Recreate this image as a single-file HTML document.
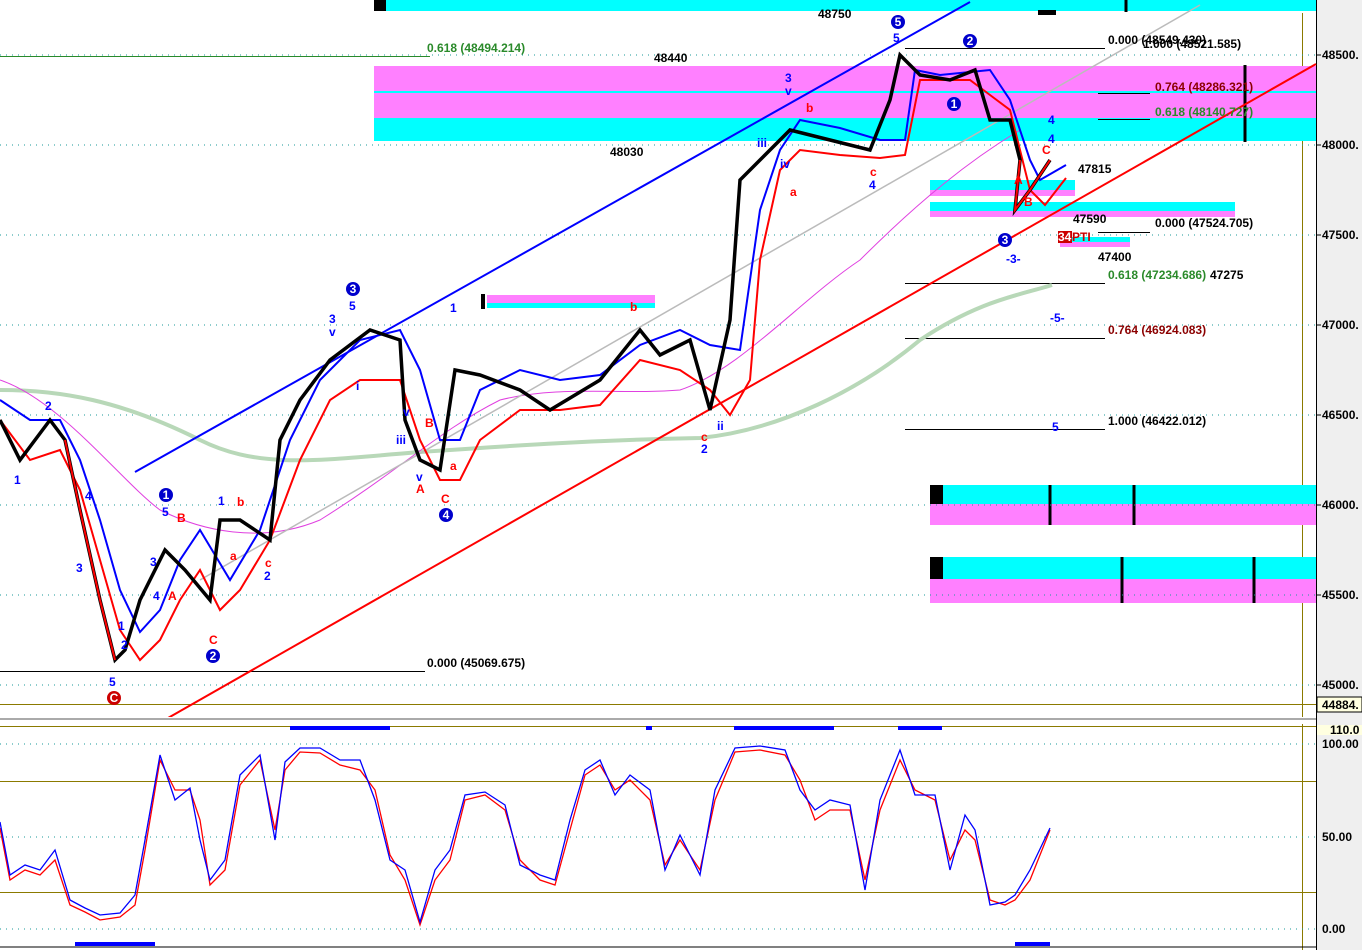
<!DOCTYPE html>
<html><head><meta charset="utf-8"><style>
html,body{margin:0;padding:0;background:#fff;}
svg{display:block;font-family:"Liberation Sans",Arial,sans-serif;}
text{font-size:12px;}
.b{font-weight:bold;}
</style></head><body>
<svg width="1362" height="950" viewBox="0 0 1362 950">
<rect x="0" y="0" width="1362" height="950" fill="#fff"/>
<rect x="1317" y="0" width="45" height="950" fill="#efefef"/>
<line x1="1316.5" y1="0" x2="1316.5" y2="950" stroke="#000"/>
<line x1="1302.5" y1="0" x2="1302.5" y2="950" stroke="#8b7a00"/>
<rect x="386" y="0" width="930" height="11" fill="#00ffff"/>
<rect x="374" y="0" width="12" height="11" fill="#000"/>
<rect x="1222" y="11" width="94" height="2" fill="#fff"/>
<rect x="374" y="66" width="942" height="25" fill="#ff80ff"/>
<rect x="374" y="91" width="942" height="2" fill="#00ffff"/>
<rect x="374" y="93" width="942" height="25" fill="#ff80ff"/>
<rect x="374" y="118" width="942" height="23" fill="#00ffff"/>
<rect x="930" y="180" width="145" height="10" fill="#00ffff"/>
<rect x="930" y="190" width="145" height="6" fill="#ff80ff"/>
<rect x="930" y="202" width="305" height="9" fill="#00ffff"/>
<rect x="930" y="211" width="305" height="6" fill="#ff80ff"/>
<rect x="1060" y="237" width="70" height="5" fill="#00ffff"/>
<rect x="1060" y="242" width="70" height="5" fill="#ff80ff"/>
<rect x="487" y="295" width="168" height="8" fill="#ff80ff"/>
<rect x="487" y="303" width="168" height="5" fill="#00ffff"/>
<rect x="481" y="294" width="4" height="15" fill="#000"/>
<rect x="930" y="485" width="386" height="19" fill="#00ffff"/>
<rect x="930" y="504" width="386" height="21" fill="#ff80ff"/>
<rect x="930" y="485" width="13" height="19" fill="#000"/>
<rect x="930" y="557" width="386" height="22" fill="#00ffff"/>
<rect x="930" y="579" width="386" height="24" fill="#ff80ff"/>
<rect x="930" y="557" width="13" height="22" fill="#000"/>
<g stroke="#000" stroke-width="3"><line x1="1050" y1="485" x2="1050" y2="525"/><line x1="1134" y1="485" x2="1134" y2="525"/><line x1="1122" y1="557" x2="1122" y2="603"/><line x1="1254" y1="557" x2="1254" y2="603"/><line x1="1245" y1="65" x2="1245" y2="142"/><line x1="1126" y1="0" x2="1126" y2="12"/></g>
<rect x="1038" y="10" width="18" height="5" fill="#000"/>
<g stroke="#1a9a9a" stroke-dasharray="1,5">
<line x1="0" y1="55" x2="1316" y2="55"/><line x1="0" y1="145" x2="1316" y2="145"/><line x1="0" y1="235" x2="1316" y2="235"/><line x1="0" y1="325" x2="1316" y2="325"/><line x1="0" y1="415" x2="1316" y2="415"/><line x1="0" y1="505" x2="1316" y2="505"/><line x1="0" y1="595" x2="1316" y2="595"/><line x1="0" y1="685" x2="1316" y2="685"/>
<line x1="0" y1="744" x2="1316" y2="744"/><line x1="0" y1="837" x2="1316" y2="837"/><line x1="0" y1="929" x2="1316" y2="929"/>
</g>
<line x1="0" y1="704.5" x2="1316" y2="704.5" stroke="#8b7a00"/>
<line x1="0" y1="56.5" x2="430" y2="56.5" stroke="#2a8a2a"/>
<g stroke="#000" stroke-width="1">
<line x1="0" y1="671.5" x2="425" y2="671.5"/>
<line x1="905" y1="48.5" x2="1105" y2="48.5"/>
<line x1="1098" y1="93.5" x2="1150" y2="93.5"/>
<line x1="1098" y1="119.5" x2="1150" y2="119.5"/>
<line x1="1098" y1="232.5" x2="1150" y2="232.5"/>
<line x1="905" y1="283.5" x2="1105" y2="283.5"/>
<line x1="905" y1="338.5" x2="1105" y2="338.5"/>
<line x1="905" y1="429.5" x2="1105" y2="429.5"/>
</g>
<path d="M0,390 C60,390 120,400 200,440 C260,470 320,460 420,452 C520,445 600,440 700,438 C780,430 860,390 920,340 C980,300 1020,295 1052,285" fill="none" stroke="#b8d8b8" stroke-width="4"/>
<path d="M0,380 C60,400 120,480 160,510 C200,530 260,545 320,520 C400,470 440,430 500,400 C560,385 620,395 680,390 C740,370 800,300 860,260 C920,200 970,160 1020,130" fill="none" stroke="#e040e0" stroke-width="1"/>
<line x1="135" y1="472" x2="970" y2="2" stroke="#0000ff" stroke-width="2"/>
<line x1="168" y1="718" x2="1316" y2="64" stroke="#ff0000" stroke-width="2"/>
<line x1="200" y1="580" x2="1200" y2="5" stroke="#bbb" stroke-width="1.5"/>
<polyline fill="none" stroke="#0000ff" stroke-width="2" points="0,400 30,420 60,420 80,460 100,520 120,590 140,632 160,610 180,560 200,530 230,580 260,530 290,440 320,380 360,340 400,330 420,370 440,440 460,440 480,390 520,370 560,380 600,375 640,345 680,330 710,345 740,350 760,210 780,150 800,120 840,128 880,140 905,140 915,70 940,75 970,72 990,70 1010,100 1030,160 1040,180 1066,165"/>
<polyline fill="none" stroke="#ff0000" stroke-width="2" points="0,420 30,460 60,450 80,490 100,560 120,630 140,660 160,640 180,600 200,570 220,610 240,590 270,540 300,460 330,400 360,380 400,380 420,440 440,480 460,480 480,440 520,410 560,410 600,405 640,360 680,370 710,390 730,415 750,380 760,260 780,170 800,150 840,155 880,158 905,155 920,80 940,80 970,80 990,95 1010,110 1030,190 1045,205 1066,178"/>
<polyline fill="none" stroke="#000" stroke-width="3.5" points="0,420 20,460 50,420 65,440 80,510 100,600 115,660 125,650 140,600 165,550 185,570 210,600 220,520 240,520 270,540 280,440 300,400 330,360 370,330 400,340 405,420 420,460 440,470 455,370 480,375 520,390 550,410 600,380 640,330 660,355 690,340 710,410 730,320 740,180 790,130 830,140 870,150 890,100 900,55 920,75 950,80 975,70 990,120 1010,120 1020,160 1015,210 1030,190 1050,160"/>
<polyline fill="none" stroke="#ff0000" stroke-width="2" points="65,440 80,510 100,600 115,660"/>
<polyline fill="none" stroke="#ff0000" stroke-width="2" points="1020,160 1015,210 1030,190 1050,160"/>
<g class="b">
<text x="427" y="52" fill="#2a8a2a">0.618 (48494.214)</text>
<text x="427" y="667" fill="#000">0.000 (45069.675)</text>
<text x="1108" y="44" fill="#000">0.000 (48549.430)</text>
<text x="1143" y="48" fill="#000">1.000 (48521.585)</text>
<text x="1155" y="91" fill="#8b0000">0.764 (48286.321)</text>
<text x="1155" y="116" fill="#2a8a2a">0.618 (48140.727)</text>
<text x="1155" y="227" fill="#000">0.000 (47524.705)</text>
<text x="1108" y="279" fill="#2a8a2a">0.618 (47234.686)</text>
<text x="1210" y="279" fill="#000">47275</text>
<text x="1108" y="334" fill="#8b0000">0.764 (46924.083)</text>
<text x="1108" y="425" fill="#000">1.000 (46422.012)</text>
<text x="818" y="18" fill="#000">48750</text>
<text x="654" y="62" fill="#000">48440</text>
<text x="610" y="156" fill="#000">48030</text>
<text x="1078" y="173" fill="#000">47815</text>
<text x="1073" y="223" fill="#000">47590</text>
<text x="1098" y="261" fill="#000">47400</text>
</g>
<g class="b" font-size="12">
<text x="14" y="484" fill="#00f">1</text><text x="45" y="410" fill="#00f">2</text><text x="76" y="572" fill="#00f">3</text><text x="85" y="500" fill="#00f">4</text><text x="109" y="686" fill="#00f">5</text><text x="121" y="649" fill="#00f">2</text><text x="118" y="630" fill="#00f">1</text>
<text x="150" y="566" fill="#00f">3</text><text x="162" y="516" fill="#00f">5</text><text x="153" y="600" fill="#00f">4</text><text x="177" y="522" fill="#f00">B</text><text x="168" y="600" fill="#f00">A</text><text x="209" y="644" fill="#f00">C</text>
<text x="218" y="505" fill="#00f">1</text><text x="237" y="506" fill="#f00">b</text><text x="230" y="560" fill="#f00">a</text><text x="265" y="567" fill="#f00">c</text><text x="264" y="580" fill="#00f">2</text>
<text x="329" y="323" fill="#00f">3</text><text x="329" y="336" fill="#00f">v</text><text x="349" y="310" fill="#00f">5</text><text x="356" y="390" fill="#00f">i</text><text x="403" y="416" fill="#00f">v</text><text x="396" y="444" fill="#00f">iii</text>
<text x="425" y="427" fill="#f00">B</text><text x="416" y="481" fill="#00f">v</text><text x="416" y="493" fill="#f00">A</text><text x="450" y="470" fill="#f00">a</text><text x="441" y="503" fill="#f00">C</text><text x="450" y="312" fill="#00f">1</text>
<text x="630" y="311" fill="#f00">b</text><text x="701" y="441" fill="#f00">c</text><text x="701" y="453" fill="#00f">2</text><text x="717" y="430" fill="#00f">ii</text>
<text x="785" y="82" fill="#00f">3</text><text x="785" y="95" fill="#00f">v</text><text x="806" y="112" fill="#f00">b</text><text x="757" y="147" fill="#00f">iii</text><text x="780" y="168" fill="#00f">iv</text><text x="790" y="196" fill="#f00">a</text>
<text x="870" y="176" fill="#f00">c</text><text x="869" y="189" fill="#00f">4</text><text x="893" y="42" fill="#00f">5</text>
<text x="1014" y="184" fill="#f00">A</text><text x="1024" y="206" fill="#f00">B</text><text x="1042" y="154" fill="#f00">C</text>
<text x="1006" y="263" fill="#00f">-3-</text><text x="1050" y="322" fill="#00f">-5-</text><text x="1052" y="431" fill="#00f">5</text><text x="1048" y="124" fill="#00f">4</text><text x="1048" y="143" fill="#00f">4</text>
</g>
<g font-size="11" font-weight="bold" text-anchor="middle" fill="#fff">
<circle cx="166" cy="495" r="7" fill="#0000cc"/><text x="166" y="499">1</text>
<circle cx="213" cy="656" r="7" fill="#0000cc"/><text x="213" y="660">2</text>
<circle cx="353" cy="289" r="7" fill="#0000cc"/><text x="353" y="293">3</text>
<circle cx="446" cy="515" r="7" fill="#0000cc"/><text x="446" y="519">4</text>
<circle cx="898" cy="22" r="7" fill="#0000cc"/><text x="898" y="26">5</text>
<circle cx="970" cy="41" r="7" fill="#0000cc"/><text x="970" y="45">2</text>
<circle cx="954" cy="104" r="7" fill="#0000cc"/><text x="954" y="108">1</text>
<circle cx="1005" cy="240" r="7" fill="#0000cc"/><text x="1005" y="244">3</text>
<circle cx="114" cy="698" r="7" fill="#cc0000"/><text x="114" y="702">C</text>
</g>
<rect x="1058" y="231" width="14" height="12" fill="#cc0000"/><text x="1058" y="241" font-size="11" fill="#fff" class="b">34</text><text x="1072" y="241" font-size="11" fill="#cc0000" class="b">PTI</text>
<g font-size="12" class="b" fill="#000">
<text x="1322" y="59">48500.</text><text x="1322" y="149">48000.</text><text x="1322" y="239">47500.</text><text x="1322" y="329">47000.</text><text x="1322" y="419">46500.</text><text x="1322" y="509">46000.</text><text x="1322" y="599">45500.</text><text x="1322" y="689">45000.</text>
<text x="1322" y="748">100.00</text><text x="1322" y="841">50.00</text><text x="1322" y="933">0.00</text>
</g>
<rect x="1317" y="697" width="45" height="15" fill="#ffffe0" stroke="#000"/><text x="1322" y="709" class="b">44884.</text>
<rect x="1317" y="725" width="45" height="10" fill="#ffffe0"/><text x="1330" y="734" class="b" font-size="11">110.0</text>
<g stroke="#000"><line x1="1317" y1="55" x2="1321" y2="55"/><line x1="1317" y1="145" x2="1321" y2="145"/><line x1="1317" y1="235" x2="1321" y2="235"/><line x1="1317" y1="325" x2="1321" y2="325"/><line x1="1317" y1="415" x2="1321" y2="415"/><line x1="1317" y1="505" x2="1321" y2="505"/><line x1="1317" y1="595" x2="1321" y2="595"/><line x1="1317" y1="685" x2="1321" y2="685"/></g>
<rect x="0" y="717" width="1316" height="7" fill="#fff"/>
<line x1="0" y1="719" x2="1316" y2="719" stroke="#aaa" stroke-width="2"/>
<line x1="0" y1="726.5" x2="1316" y2="726.5" stroke="#8b7a00"/>
<rect x="290" y="726" width="100" height="4" fill="#0000ff"/><rect x="646" y="726" width="6" height="4" fill="#0000ff"/><rect x="734" y="726" width="100" height="4" fill="#0000ff"/><rect x="898" y="726" width="44" height="4" fill="#0000ff"/>
<rect x="75" y="942" width="80" height="4" fill="#0000ff"/><rect x="1015" y="942" width="35" height="4" fill="#0000ff"/>
<line x1="0" y1="781.5" x2="1316" y2="781.5" stroke="#8b7a00"/>
<line x1="0" y1="892.5" x2="1316" y2="892.5" stroke="#8b7a00"/>
<line x1="0" y1="947" x2="1316" y2="947" stroke="#000"/>
<polyline fill="none" stroke="#ff0000" stroke-width="1.3" points="0,828 10,880 25,870 40,875 55,860 70,905 85,912 100,920 120,917 135,905 145,850 160,760 175,790 190,790 200,820 210,885 225,870 240,785 260,760 275,830 285,770 300,752 320,753 340,765 360,770 375,790 390,855 405,880 420,925 435,880 450,860 465,800 485,795 505,810 520,860 540,880 555,885 570,830 585,775 600,765 615,790 630,780 650,800 665,865 680,840 700,870 715,800 735,752 760,750 785,755 800,780 815,820 830,810 850,810 865,880 880,810 900,760 915,790 935,800 950,860 965,830 975,840 990,900 1005,905 1015,900 1030,880 1050,830"/>
<polyline fill="none" stroke="#0000ff" stroke-width="1.3" points="0,822 10,875 25,865 40,870 55,850 70,900 85,908 100,915 120,913 135,895 145,840 160,755 175,800 190,788 200,840 210,880 225,860 240,775 260,755 275,840 285,762 300,748 320,748 340,760 360,760 375,800 390,860 405,870 420,922 435,870 450,850 465,795 485,792 505,805 520,865 540,875 555,880 570,820 585,770 600,760 615,795 630,775 650,790 665,870 680,835 700,875 715,790 735,748 760,746 785,750 800,790 815,810 830,800 850,805 865,890 880,800 900,750 915,795 935,795 950,870 965,815 975,830 990,905 1005,902 1015,895 1030,870 1050,828"/>
</svg>
</body></html>
